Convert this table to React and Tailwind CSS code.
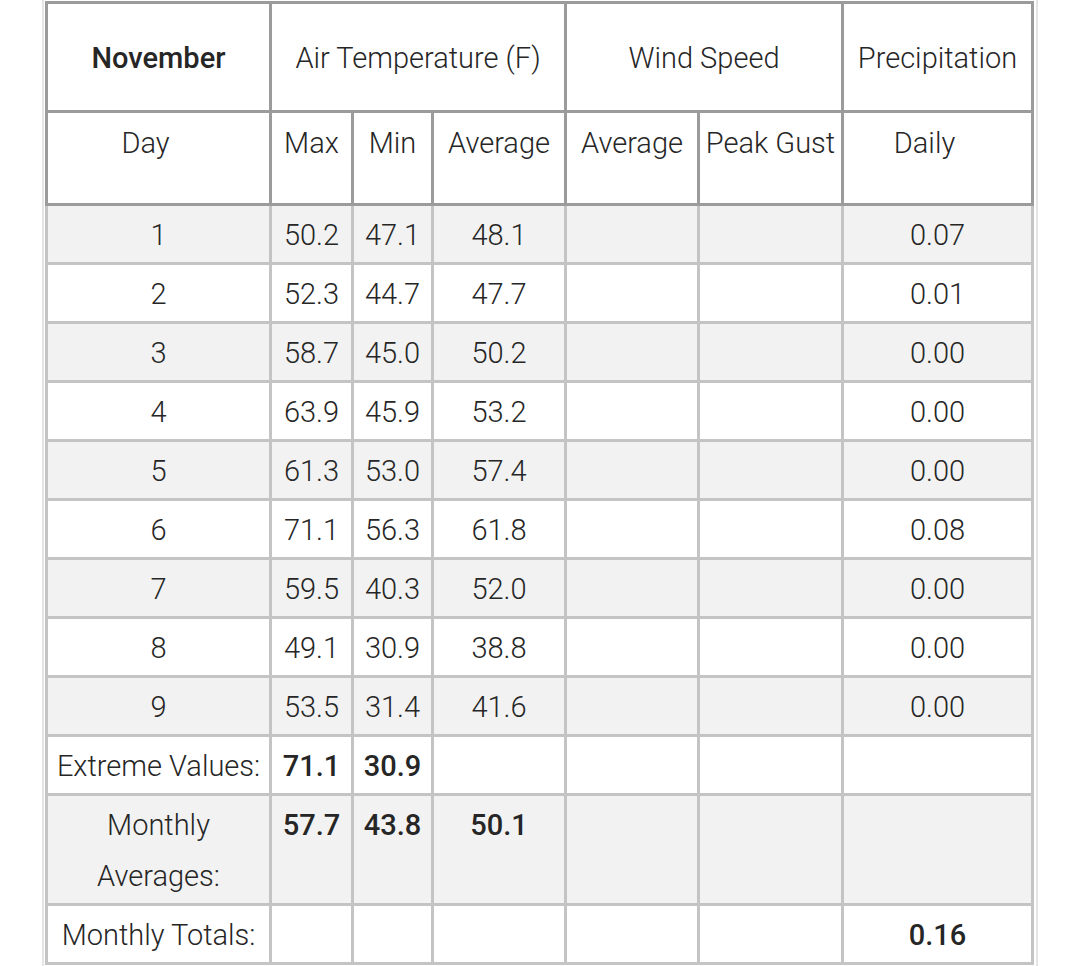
import React from "react";

const days = [
  ["1", "50.2", "47.1", "48.1", "0.07"],
  ["2", "52.3", "44.7", "47.7", "0.01"],
  ["3", "58.7", "45.0", "50.2", "0.00"],
  ["4", "63.9", "45.9", "53.2", "0.00"],
  ["5", "61.3", "53.0", "57.4", "0.00"],
  ["6", "71.1", "56.3", "61.8", "0.08"],
  ["7", "59.5", "40.3", "52.0", "0.00"],
  ["8", "49.1", "30.9", "38.8", "0.00"],
  ["9", "53.5", "31.4", "41.6", "0.00"],
];

// header cells use the darker rule, body cells the lighter one
const head = "border-r-[3px] border-b-[3px] border-[#9b9b9b] text-center";
const body = "border-r-[3px] border-b-[3px] border-[#c4c4c4] text-center pt-[4px]";

function BodyRow({ cells, shaded, bold = [] }) {
  const bg = shaded ? "bg-[#f2f2f2]" : "bg-white";
  return cells.map((c, i) => (
    <div
      key={i}
      className={`${body} ${bg} ${i === 0 ? "border-l-[3px]" : ""} ${
        bold.includes(i) ? "font-medium" : ""
      }`}
    >
      {c}
    </div>
  ));
}

export default function App() {
  return (
    <main className="min-h-screen bg-white">
      <div className="ml-[42px] w-[996px] min-h-screen border-x-2 border-[#e5e5e5] pl-px pr-[2px] pt-px">
        <div
          className="grid grid-cols-[227px_82px_80px_133px_133px_144px_190px] grid-rows-[112px_93px_repeat(9,59px)_59px_110px_59px] text-[29px] leading-[51px] font-light text-[#262626]"
          style={{ fontFamily: "Roboto, 'Liberation Sans', sans-serif" }}
        >
          {/* group headings */}
          <div className={`${head} border-l-[3px] border-t-[3px] flex items-center justify-center pt-[3px] font-medium`}>
            November
          </div>
          <div className={`${head} col-span-3 border-t-[3px] flex items-center justify-center pt-[3px]`}>
            Air Temperature (F)
          </div>
          <div className={`${head} col-span-2 border-t-[3px] flex items-center justify-center pt-[3px]`}>
            Wind Speed
          </div>
          <div className={`${head} border-t-[3px] flex items-center justify-center pt-[3px]`}>
            Precipitation
          </div>

          {/* column headings */}
          <div className={`${head} border-l-[3px] pt-[5px] pr-[26px]`}>Day</div>
          <div className={`${head} pt-[5px]`}>Max</div>
          <div className={`${head} pt-[5px]`}>Min</div>
          <div className={`${head} pt-[5px]`}>Average</div>
          <div className={`${head} pt-[5px]`}>Average</div>
          <div className={`${head} pt-[5px] whitespace-nowrap`}>Peak Gust</div>
          <div className={`${head} pt-[5px] pr-[26px]`}>Daily</div>

          {days.map((d, i) => (
            <BodyRow
              key={d[0]}
              shaded={i % 2 === 0}
              cells={[d[0], d[1], d[2], d[3], "", "", d[4]]}
            />
          ))}

          <BodyRow
            shaded={false}
            bold={[1, 2]}
            cells={["Extreme Values:", "71.1", "30.9", "", "", "", ""]}
          />
          <BodyRow
            shaded
            bold={[1, 2, 3]}
            cells={[
              <>
                Monthly
                <br />
                Averages:
              </>,
              "57.7",
              "43.8",
              "50.1",
              "",
              "",
              "",
            ]}
          />
          <BodyRow
            shaded={false}
            bold={[6]}
            cells={["Monthly Totals:", "", "", "", "", "", "0.16"]}
          />
        </div>
      </div>
    </main>
  );
}
